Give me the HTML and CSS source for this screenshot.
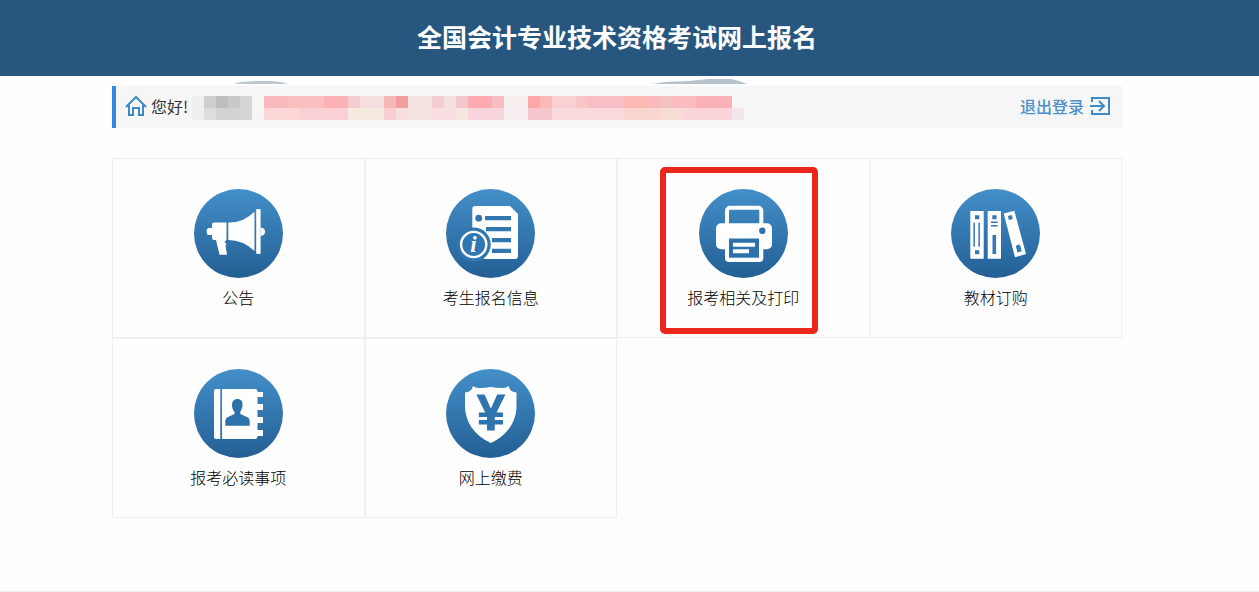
FILE: index.html
```
<!DOCTYPE html>
<html lang="zh-CN">
<head>
    <meta charset="UTF-8">
    <meta name="viewport" content="width=device-width, initial-scale=1.0">
    <title>全国会计专业技术资格考试网上报名</title>
    <link rel="stylesheet" href="styles.css">
</head>
<body>
    <header class="header">
        <h1>全国会计专业技术资格考试网上报名</h1>
    </header>

    <main class="container">
        <div class="user-bar">
            <svg class="smudge" width="520" height="6" viewBox="0 0 520 6" aria-hidden="true">
                <path d="M3 5L10 3L24 2H41L50 3L57 5Z" fill="#bdc9cf"/>
                <path d="M421 5L434 3L458 2L478 0H500L508 2L516 5Z" fill="#b6c2cc"/>
            </svg>
            <svg class="home-icon" width="22" height="22" viewBox="0 0 22 22" fill="none" stroke="#3d8ac6" stroke-width="2" aria-hidden="true">
                <path d="M1 12L11 2L21 12M4 10V20H8V13H14V20H18V10"/>
            </svg>
            <span class="hello">您好!</span>
            <!-- masked name and id number -->
            <svg class="mask" width="552" height="24" viewBox="0 0 552 24" shape-rendering="crispEdges" aria-hidden="true">
                <path fill="#eeefee" d="M0 0h12v24H0z"/>
                <path fill="#cfcfd0" d="M12 0h12v12H12z"/>
                <path fill="#bebec0" d="M24 0h12v12H24z"/>
                <path fill="#c9c9ca" d="M36 0h12v12H36z"/>
                <path fill="#d6d6d7" d="M48 0h12v24H48z"/>
                <path fill="#dcdddd" d="M12 12h12v12H12z"/>
                <path fill="#d2d3d4" d="M24 12h24v12H24z"/>
                <path fill="#fab9bc" d="M72 0h24v12H72z"/>
                <path fill="#fbbfc0" d="M96 0h36v12H96z"/>
                <path fill="#fcb2b5" d="M132 0h24v12H132z"/>
                <path fill="#f4cdd1" d="M156 0h12v12H156z"/>
                <path fill="#f8dfdf" d="M168 0h24v12H168z"/>
                <path fill="#f5b8b7" d="M192 0h12v12H192z"/>
                <path fill="#f39e9e" d="M204 0h12v12H204z"/>
                <path fill="#f6e4e3" d="M216 0h24v24H216z"/>
                <path fill="#f4cdd0" d="M240 0h12v12H240z"/>
                <path fill="#f4e1de" d="M252 0h12v12H252z"/>
                <path fill="#f6c8cd" d="M264 0h12v12H264z"/>
                <path fill="#fdabb1" d="M276 0h24v12H276z"/>
                <path fill="#f7bdc3" d="M300 0h12v12H300z"/>
                <path fill="#f5eeee" d="M312 0h24v24H312z"/>
                <path fill="#fca7a8" d="M336 0h12v12H336z"/>
                <path fill="#fab8b9" d="M348 0h12v12H348z"/>
                <path fill="#fad0d3" d="M360 0h24v12H360z"/>
                <path fill="#f8c5c7" d="M384 0h12v12H384z"/>
                <path fill="#f9bec5" d="M396 0h36v12H396z"/>
                <path fill="#fcb8b3" d="M432 0h24v12H432z"/>
                <path fill="#fab9bd" d="M456 0h12v12H456z"/>
                <path fill="#f4c2bf" d="M468 0h12v12H468z"/>
                <path fill="#fabcc0" d="M480 0h24v12H480z"/>
                <path fill="#fab2b6" d="M504 0h36v12H504z"/>
                <path fill="#fcd6d6" d="M72 12h36v12H72z"/>
                <path fill="#fad0d4" d="M108 12h48v12H108z"/>
                <path fill="#f5eadf" d="M156 12h36v12H156z"/>
                <path fill="#f8ced2" d="M192 12h12v12H192z"/>
                <path fill="#f8dfdd" d="M204 12h12v12H204z"/>
                <path fill="#fadde0" d="M240 12h24v12H240z"/>
                <path fill="#f7e5df" d="M264 12h12v12H264z"/>
                <path fill="#f8d5dc" d="M276 12h36v12H276z"/>
                <path fill="#f5c6ce" d="M336 12h24v12H336z"/>
                <path fill="#fad9dc" d="M360 12h72v12H360z"/>
                <path fill="#f8d6cf" d="M432 12h36v12H432z"/>
                <path fill="#f6dcd4" d="M468 12h24v12H468z"/>
                <path fill="#fad4d8" d="M492 12h48v12H492z"/>
                <path fill="#f3e6ea" d="M540 12h12v12H540z"/>
            </svg>
            <a class="logout" href="#">
                退出登录
                <svg width="20" height="18" viewBox="0 0 20 18" fill="none" stroke="#3d8ac6" stroke-width="2" aria-hidden="true">
                    <path d="M2 5V1H19V17H2V13M0 9H14M9 4L14 9L9 14"/>
                </svg>
            </a>
        </div>

        <nav class="menu">
            <a class="menu-item" href="#">
                <svg class="icon" viewBox="0 0 89 89" aria-hidden="true">
                    <defs>
                        <linearGradient id="blue" x1="0" y1="0" x2="0" y2="1">
                            <stop offset="0" stop-color="#438fc9"/>
                            <stop offset="1" stop-color="#235f94"/>
                        </linearGradient>
                    </defs>
                    <circle cx="44.5" cy="44.5" r="44.5" fill="url(#blue)"/>
                    <g fill="#fff">
                        <path d="M18 35Q18 33.5 20 33.5H32.5V51L30.5 53L32.5 55L31.5 57L33 65.7H25.5L22 51H20Q18 51 18 49V46H15Q12.7 46 12.7 43.5V41.5Q12.7 39 15 39H18Z"/>
                        <path d="M34.3 33.5Q49 34 60.5 22.7V62Q49 51 34.3 51Z"/>
                        <rect x="62.2" y="20" width="4.4" height="45" rx="1"/>
                        <path d="M66.6 38.5Q71 39 71 42.7T66.6 47Z"/>
                    </g>
                </svg>
                <span>公告</span>
            </a>
            <a class="menu-item" href="#">
                <svg class="icon" viewBox="0 0 89 89" aria-hidden="true">
                    <circle cx="44.5" cy="44.5" r="44.5" fill="url(#blue)"/>
                    <path d="M29 17H64L72 25V67Q72 70 69 70H26.3V20Q26.3 17 29 17Z" fill="#fff"/>
                    <g fill="#3076b0">
                        <circle cx="32.7" cy="29.2" r="3.4"/>
                        <path d="M39 27H65V31.3H39ZM40 38H65V42.3H40ZM46 49H65V53.3H46ZM46 59.7H65V64H46Z"/>
                        <circle cx="27.7" cy="55.5" r="17"/>
                        <path d="M22 66H38V71H22Z"/>
                    </g>
                    <circle cx="27.7" cy="55.5" r="12.6" fill="none" stroke="#fff" stroke-width="2.4"/>
                    <text class="info-mark" x="27.5" y="63">i</text>
                </svg>
                <span>考生报名信息</span>
            </a>
            <a class="menu-item marked" href="#">
                <svg class="icon" viewBox="0 0 89 89" aria-hidden="true">
                    <circle cx="44.5" cy="44.5" r="44.5" fill="url(#blue)"/>
                    <rect x="28" y="18.7" width="34.3" height="30" rx="3" fill="none" stroke="#fff" stroke-width="4"/>
                    <rect x="17" y="34.3" width="56" height="26" rx="5" fill="#fff"/>
                    <rect x="26" y="46" width="38.3" height="27" rx="4" fill="#fff"/>
                    <g fill="#2d70aa">
                        <circle cx="63.3" cy="41.7" r="3.2"/>
                        <path d="M30 49.5H60V68.7H30Z"/>
                    </g>
                    <path d="M34 53.7H56V57.7H34ZM34 60.3H50V64.3H34Z" fill="#fff"/>
                </svg>
                <span>报考相关及打印</span>
            </a>
            <a class="menu-item" href="#">
                <svg class="icon" viewBox="0 0 89 89" aria-hidden="true">
                    <circle cx="44.5" cy="44.5" r="44.5" fill="url(#blue)"/>
                    <path d="M19.3 22H32.7V69.7H19.3ZM36.7 22H50V69.7H36.7ZM52.7 24.5L63.3 21.7L75 65L64 68.3Z" fill="#fff"/>
                    <g fill="#3379b4">
                        <path d="M24 26.3h4.3v4H24zM24 61.3h4.3v4H24zM22.4 33.7h1.5v24h-1.5zM27.4 33.7h1.5v24h-1.5z"/>
                        <path d="M41.3 26.3h4.3v4h-4.3zM40 32.5h6.6V34H40zM40 36h6.6v1.5H40zM41.5 46h3.6v19h-3.6z"/>
                        <rect x="57.3" y="26.5" width="4" height="4" transform="rotate(-15 59.3 28.5)"/>
                        <rect x="65.5" y="56" width="4.4" height="7" transform="rotate(-15 67.7 59.5)"/>
                    </g>
                </svg>
                <span>教材订购</span>
            </a>
            <a class="menu-item" href="#">
                <svg class="icon" viewBox="0 0 89 89" aria-hidden="true">
                    <circle cx="44.5" cy="44.5" r="44.5" fill="url(#blue)"/>
                    <g fill="#fff">
                        <path d="M22 20H26.3V70H22Q20 70 20 68V22Q20 20 22 20Z"/>
                        <path d="M28 20H61Q63.5 20 63.5 23H69V28H63.5V35H69V41H63.5V48H69V54H63.5V61H69V67H63.5Q63.5 70 61 70H28Z"/>
                    </g>
                    <path d="M43.3 30C47 30 49 32.5 48.5 37C48 40 47 41.5 46.3 43V45L53 48Q55.7 49 55.7 52V56.7H31.3V52Q31.3 49 34 48L40.5 45V43C39 41.5 38.5 40 38 37C37.7 32.5 40 30 43.3 30Z" fill="#2e72ac"/>
                </svg>
                <span>报考必读事项</span>
            </a>
            <a class="menu-item" href="#">
                <svg class="icon" viewBox="0 0 89 89" aria-hidden="true">
                    <circle cx="44.5" cy="44.5" r="44.5" fill="url(#blue)"/>
                    <path d="M27 17Q29 19 33 19Q40 19 44.7 18Q50 19 57 19Q61 19 62.5 17Q64 23 70.5 23.5V37C70.5 52 62 66 44.8 74C27.5 66 19 52 19 37V23.5Q25.5 23 27 17Z" fill="#fff"/>
                    <text class="yuan-mark" x="44.8" y="61">¥</text>
                </svg>
                <span>网上缴费</span>
            </a>
        </nav>
    </main>

    <footer class="footer"></footer>
</body>
</html>
```
FILE: styles.css
```
body {
    margin: 0;
    font-family: "Noto Sans CJK SC", "Microsoft YaHei", sans-serif;
    font-size: 16px;
    line-height: 24px;
    color: #000;
    background-color: #fefefe;
}

a {
    color: inherit;
    text-decoration: none;
}

.header {
    padding: 18px 25px 22px 0;
    background-color: #27577f;
}

.header h1 {
    margin: 0;
    font-size: 25px;
    line-height: 36px;
    text-align: center;
    color: #fff;
}

.container {
    margin: 10px 137px 0 112px;
}

.user-bar {
    position: relative;
    display: flex;
    align-items: center;
    height: 40px;
    padding: 0 12px 2px 9px;
    border-left: 4px solid #308ae3;
    background-color: #f6f6f6;
}

/* sits over the gap above the bar */
.smudge {
    position: absolute;
    top: -7px;
    left: 115px;
}

.home-icon {
    margin-right: 4px;
}

.hello {
    width: 41px;
    color: #333;
}

.mask {
    flex: none;
    margin-top: 4px;
}

.logout {
    display: flex;
    align-items: center;
    gap: 6px;
    margin-left: auto;
    font-weight: 500;
    color: #4a90cb;
}

.menu {
    display: grid;
    grid-template-columns: repeat(4, 1fr);
    margin-top: 30px;
    font-weight: 300;
}

.menu-item {
    position: relative;
    display: flex;
    flex-direction: column;
    align-items: center;
    gap: 7px;
    box-sizing: border-box;
    min-height: 180px;
    padding-top: 30px;
    border: 1px solid #f0f0f0;
}

.icon {
    width: 89px;
    height: 89px;
}

/* red frame around the highlighted entry */
.marked::after {
    content: "";
    position: absolute;
    top: 8px;
    left: 42px;
    box-sizing: border-box;
    width: 158px;
    height: 167px;
    border: 6px solid #eb261b;
    border-radius: 5px;
}

.info-mark {
    font: italic bold 23px "Liberation Serif", serif;
    text-anchor: middle;
    fill: #fff;
}

.yuan-mark {
    font: bold 50px "Liberation Sans", sans-serif;
    text-anchor: middle;
    fill: #2f74ae;
    stroke: #2f74ae;
    stroke-width: 1px;
}

.footer {
    margin-top: 73px;
    border-top: 1px solid #eee;
}
```
